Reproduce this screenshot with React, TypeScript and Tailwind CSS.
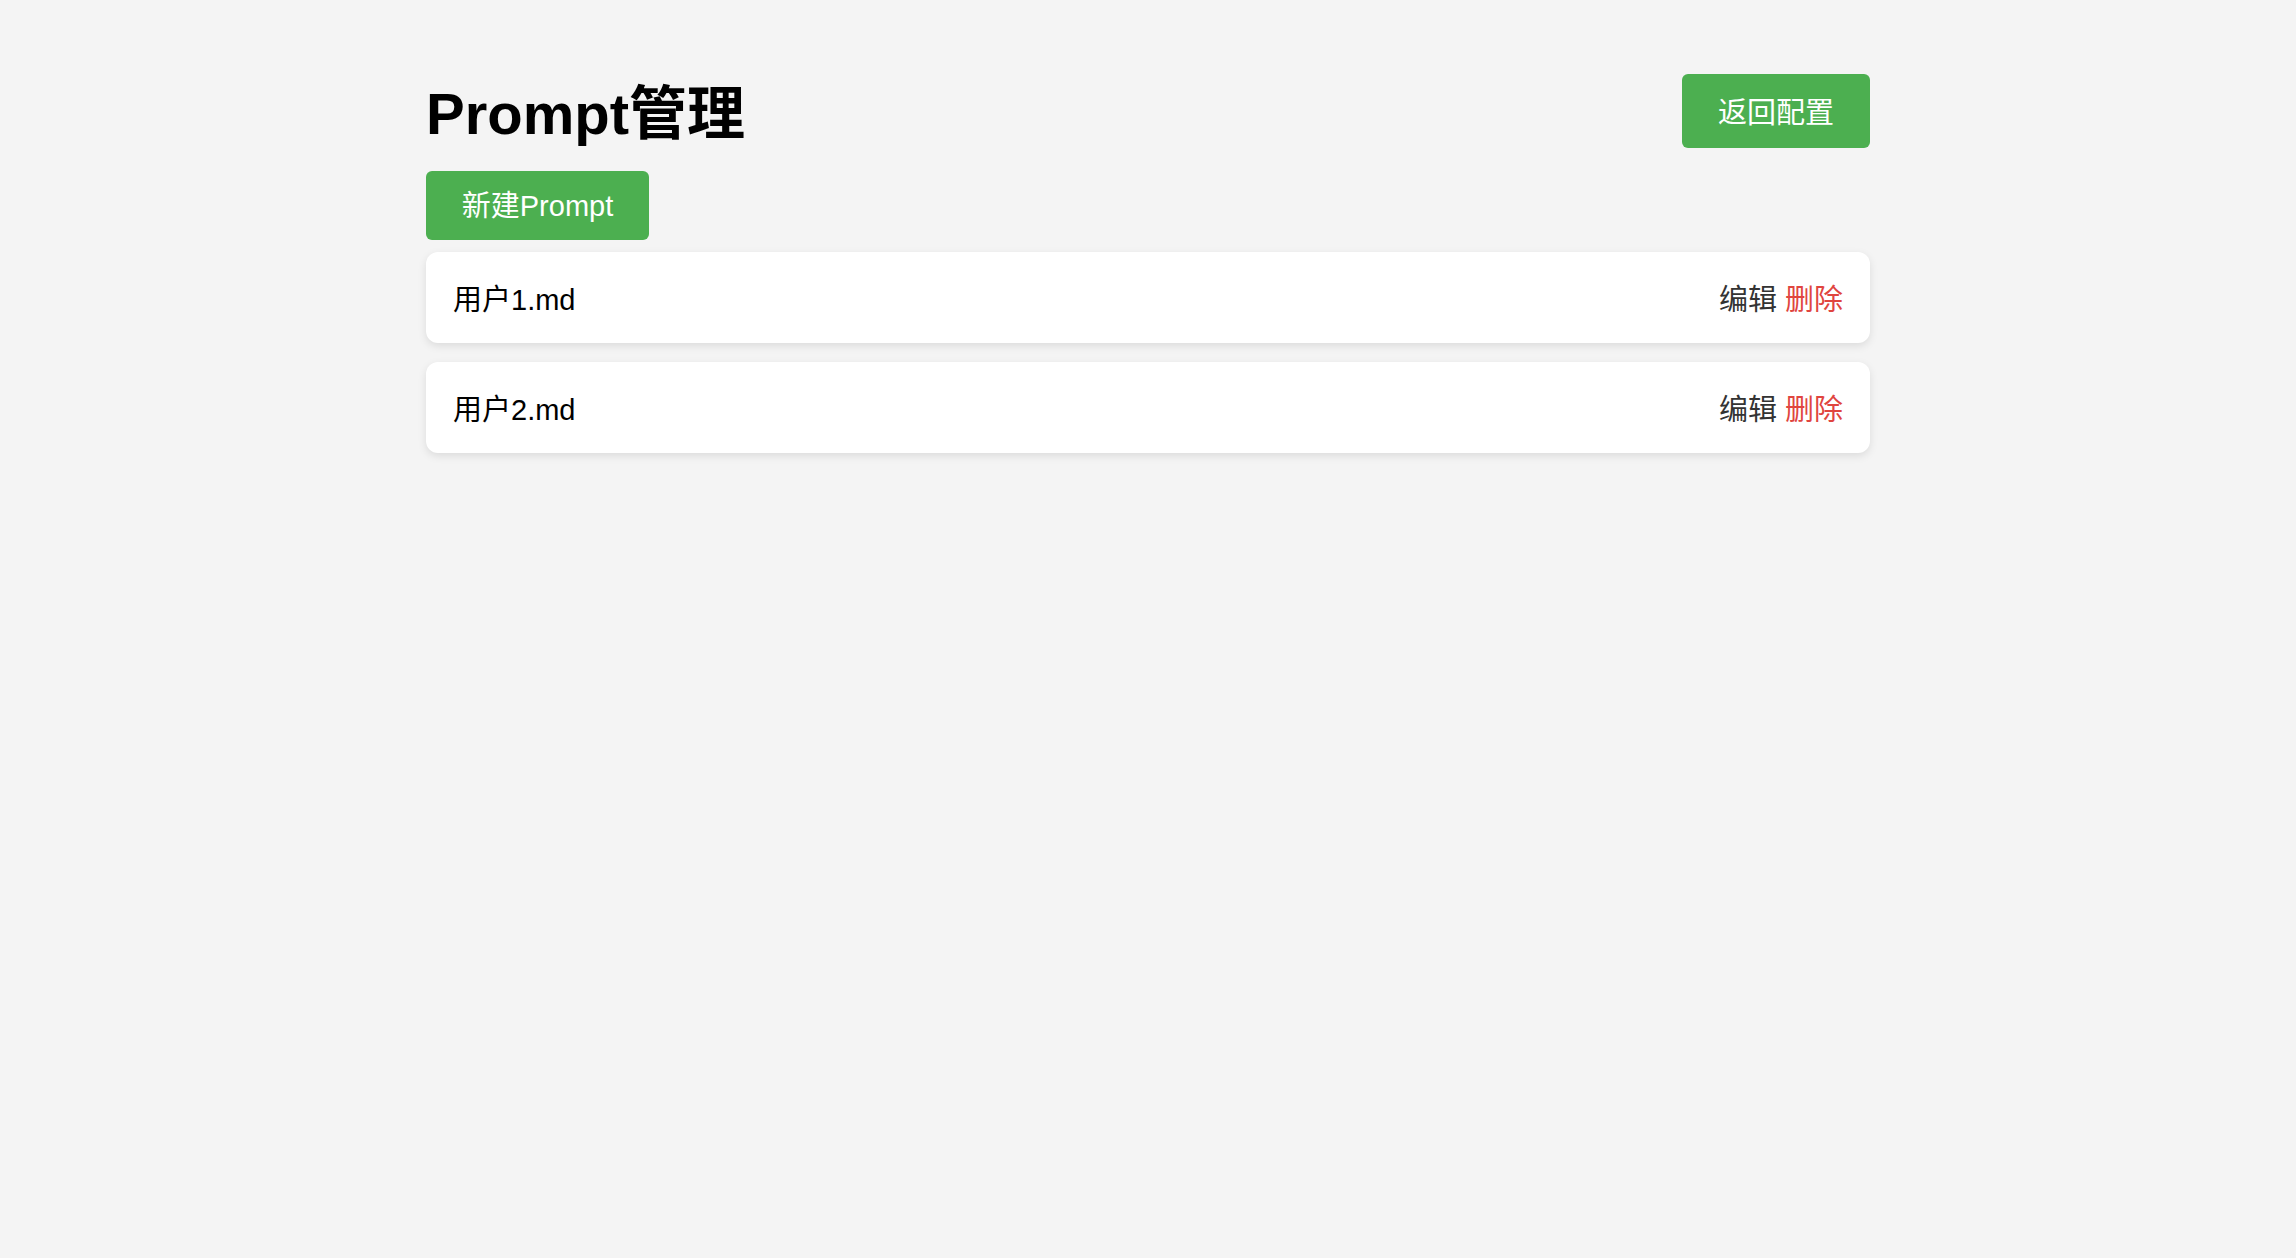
export default function App() {
  const items = ["用户1.md", "用户2.md"];
  return (
    <div
      className="min-h-[1258px] w-full bg-[#f4f4f4]"
      style={{ fontFamily: '"Liberation Sans", Arial, "Noto Sans CJK SC", sans-serif' }}
    >
      <div className="mx-auto w-[1444px] pt-[74px]">
        <div className="flex h-[74px] items-center justify-between">
          <h1 className="pt-[6px] text-[58px] font-bold leading-none text-black">Prompt管理</h1>
          <button className="h-[74px] w-[188px] rounded-[6px] bg-[#4caf50] pt-[5px] text-[29px] text-white">
            返回配置
          </button>
        </div>
        <button className="mt-[23px] h-[69px] w-[223px] rounded-[6px] bg-[#4caf50] pt-[3px] text-[29px] text-white">
          新建Prompt
        </button>
        <div className="mt-[12px] flex flex-col gap-[19px]">
          {items.map((it) => (
            <div
              key={it}
              className="flex h-[91px] items-center justify-between rounded-[12px] bg-white px-[27px] pt-[7px] shadow-[0_3px_8px_rgba(0,0,0,0.1)]"
            >
              <span className="text-[29px] text-black">{it}</span>
              <span className="text-[29px]">
                <span className="text-[#333333]">编辑</span>{" "}
                <span className="text-[#e0453f]">删除</span>
              </span>
            </div>
          ))}
        </div>
      </div>
    </div>
  );
}
